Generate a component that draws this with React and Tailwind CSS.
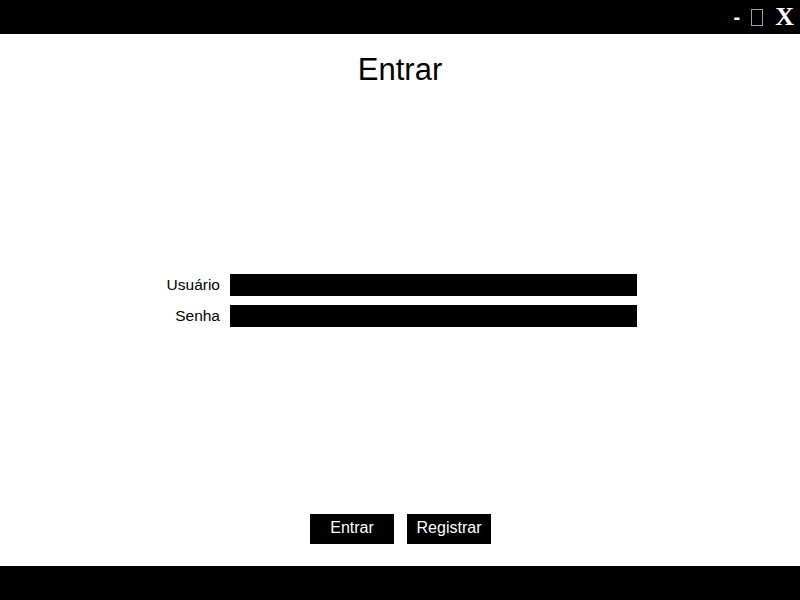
export default function App() {
    return (
        <div className="w-[800px] h-[600px] flex flex-col bg-white font-['Liberation_Sans',Arial,sans-serif] text-black">
            <div className="h-[34px] bg-black flex items-center justify-end pr-[6px] text-white">
                <span className="font-['Liberation_Sans',sans-serif] font-bold text-[20px] leading-none mr-[11px]">-</span>
                <span className="w-[12px] h-[17px] border border-gray-400 mr-[12px]" />
                <span className="font-['Liberation_Serif',serif] font-bold text-[26px] leading-none">X</span>
            </div>

            <div className="flex-1 flex flex-col">
                <h1 className="text-center text-[31px] leading-[32px] mt-[20px]">Entrar</h1>

                <div className="mt-[188px] pl-[150px] flex flex-col gap-[9px]">
                    <div className="flex items-center h-[22px]">
                        <label className="w-[70px] text-right text-[15.5px]">Usuário</label>
                        <input type="text" className="ml-[10px] w-[407px] h-[22px] bg-black outline-none" />
                    </div>
                    <div className="flex items-center h-[22px]">
                        <label className="w-[70px] text-right text-[15.5px]">Senha</label>
                        <input type="password" className="ml-[10px] w-[407px] h-[22px] bg-black outline-none" />
                    </div>
                </div>

                <div className="mt-[187px] flex justify-center gap-[13px] pl-[1px]">
                    <button className="w-[84px] h-[30px] bg-black text-white text-[16px] leading-none pb-[2px]">Entrar</button>
                    <button className="w-[84px] h-[30px] bg-black text-white text-[16px] leading-none pb-[2px]">Registrar</button>
                </div>
            </div>

            <div className="h-[34px] bg-black" />
        </div>
    );
}
